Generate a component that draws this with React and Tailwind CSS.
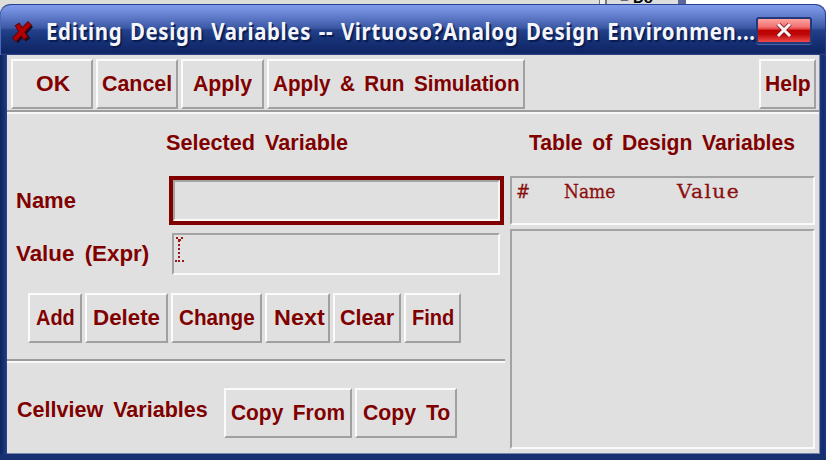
import { useLayoutEffect, useRef } from "react";

// Single-line text squeezed or stretched horizontally to a fixed width.
function Fit({ w, children, className = "" }) {
  const ref = useRef(null);
  useLayoutEffect(() => {
    const el = ref.current;
    el.style.transform = `scaleX(${w / el.offsetWidth})`;
  }, [w]);
  return (
    <span className="block h-6 shrink-0 leading-6" style={{ width: w }}>
      <span ref={ref} className={`inline-block origin-left whitespace-pre ${className}`}>
        {children}
      </span>
    </span>
  );
}

const bold = "font-['Liberation_Sans',sans-serif] text-[22px] font-bold [word-spacing:4px] text-[#800000]";
const mono = "font-['DejaVu_Serif',serif] text-[18px] text-[#8a1010] [-webkit-text-stroke:0.3px_#8a1010]";

function Label({ w, children }) {
  return <Fit w={w} className={bold}>{children}</Fit>;
}

function Button({ size, w, children }) {
  return (
    <button
      className={`flex h-[50px] shrink-0 items-center justify-center border-2 border-t-[#fbfbfb] border-l-[#fbfbfb] border-r-[#a0a0a0] border-b-[#a0a0a0] bg-[#e0e0e0] ${size}`}
    >
      <Label w={w}>{children}</Label>
    </button>
  );
}

const sunken = "border-2 border-t-[#a3a3a3] border-l-[#a3a3a3] border-r-[#f9f9f9] border-b-[#f9f9f9]";

function Rule() {
  return (
    <div className="h-1 shrink-0 border-t-2 border-b-2 border-t-[#9c9c9c] border-b-[#f8f8f8]" />
  );
}

function TitleBar() {
  return (
    <header className="flex h-[51px] shrink-0 items-center rounded-t-[10px] border-t border-[#26438f] bg-[linear-gradient(180deg,#7f9ae8_0px,#7590df_5px,#5b77c6_13px,#3b58a3_23px,#24408a_25px,#183478_34px,#0f2465_48px,#31488d_50px)] pl-3 shadow-[inset_1px_0_0_#4968b5,inset_-1px_0_0_#263f8d]">
      <svg width="22" height="24" viewBox="0 0 22 24" className="mt-[3px] shrink-0">
        <path d="M6 6 15 19M18 4 3 20" stroke="#180c26" strokeWidth="5.5" transform="translate(1 1)" />
        <path d="M5 4 14 19M18 3 2 20" stroke="#600008" strokeWidth="5.5" />
        <path d="M5.5 5 13.5 18M17.5 3.5 2.5 19.5" stroke="#b40000" strokeWidth="4" />
      </svg>
      <div className="mt-[2px] ml-3 h-8">
        <Fit
          w={710}
          className="font-['Noto_Sans','Open_Sans',sans-serif] text-[24px] leading-8 font-bold tracking-[0.8px] text-[#f4f6fc] [word-spacing:2px] [text-shadow:2px_2px_1px_#0a1b50]"
        >
          Editing Design Variables -- Virtuoso?Analog Design Environmen...
        </Fit>
      </div>
      <button className="flex h-[27px] w-[56px] shrink-0 items-center justify-center rounded-[3px] border-2 border-[#23397c] bg-[linear-gradient(180deg,#ffa4a0_0%,#f07070_35%,#dc3434_45%,#bc0000_50%,#c00808_68%,#ef4b4b_100%)] shadow-[0_1px_0_#4864a8]">
        <svg width="16" height="14" viewBox="0 0 16 14">
          <path d="M2 1 14 13M14 1 2 13" stroke="#7c1018" strokeWidth="4.5" />
          <path d="M2 1 14 13M14 1 2 13" stroke="#f8f4f4" strokeWidth="3" />
        </svg>
      </button>
    </header>
  );
}

export default function App() {
  return (
    <div className="relative flex h-[460px] w-[826px] flex-col overflow-hidden bg-[linear-gradient(90deg,#dedfdb_0_599px,#777_599px_600px,#eee_600px_605px,#777_605px_607px,#dedede_607px_678px,#5e6597_678px_686px,#fff_686px)] pt-1">
      <div className="absolute top-[-10px] left-[620px] h-4 font-['Liberation_Sans',sans-serif] text-[15px] leading-4 font-bold text-black">
        = Do
      </div>
      <div className="absolute top-3 left-0 h-10 w-1 bg-[#203a83]" />
      <div className="relative flex min-h-0 flex-1 flex-col">
        <TitleBar />
        <div className="flex min-h-0 flex-1 bg-[linear-gradient(90deg,#0d235f_0,#1b347a_5px,#2b468d_7px,#1d377d_820px,#142b6c_823px,#1b3782_826px)] pr-[6px] pb-[6px] pl-[7px] shadow-[inset_0_-6px_0_#17306f]">
          <main className="flex min-w-0 flex-1 flex-col border-r border-b border-[#7884a8] bg-[#e0e0e0]">
            <nav className="flex h-[55px] shrink-0 items-start justify-between pt-1 pr-[3px] pl-1">
              <div className="flex gap-[3px]">
                <Button size="w-[82px]" w={34}>OK</Button>
                <Button size="w-[82px]" w={70}>Cancel</Button>
                <Button size="w-[83px]" w={59}>Apply</Button>
                <Button size="w-[258px]" w={247}>{"Apply & Run Simulation"}</Button>
              </div>
              <Button size="w-[57px]" w={46}>Help</Button>
            </nav>
            <Rule />
            <div className="flex min-h-0 flex-1">
              <section className="flex w-[498px] flex-col">
                <div className="flex h-[62px] shrink-0 pt-[17px] pl-[159px]">
                  <Label w={182}>Selected Variable</Label>
                </div>
                <div className="flex h-[49px] shrink-0 items-center justify-between pr-[1px] pl-[9px]">
                  <Label w={60}>Name</Label>
                  <div className="h-[49px] w-[335px] border-4 border-[#800000]">
                    <div className={`h-full ${sunken}`} />
                  </div>
                </div>
                <div className="mt-2 flex h-[42px] shrink-0 items-center justify-between pr-[5px] pl-[9px]">
                  <Label w={133}>Value (Expr)</Label>
                  <div className={`h-[42px] w-[328px] pt-[2px] ${sunken}`}>
                    <svg width="10" height="26" viewBox="0 0 10 26" shapeRendering="crispEdges">
                      <path d="M5 3V25" stroke="#981818" strokeWidth="1.5" strokeDasharray="2 2" />
                      <path d="M2 1h2M7 1h2M4 3h3M1 24h2M8 24h2" stroke="#981818" strokeWidth="1.5" />
                    </svg>
                  </div>
                </div>
                <div className="mt-[18px] flex shrink-0 gap-[3px] pl-[21px]">
                  <Button size="w-[54px]" w={39}>Add</Button>
                  <Button size="w-[83px]" w={67}>Delete</Button>
                  <Button size="w-[91px]" w={76}>Change</Button>
                  <Button size="w-[65px]" w={51}>Next</Button>
                  <Button size="w-[68px]" w={54}>Clear</Button>
                  <Button size="w-[57px]" w={42}>Find</Button>
                </div>
                <div className="mt-4">
                  <Rule />
                </div>
                <div className="mt-[25px] flex items-start pl-[10px]">
                  <div className="mt-[10px] mr-[16px]">
                    <Label w={191}>Cellview Variables</Label>
                  </div>
                  <div className="flex gap-[3px]">
                    <Button size="w-[128px]" w={114}>Copy From</Button>
                    <Button size="w-[102px]" w={87}>Copy To</Button>
                  </div>
                </div>
              </section>
              <section className="flex flex-1 flex-col pl-[5px]">
                <div className="flex h-[62px] shrink-0 pt-[17px] pl-[19px]">
                  <Label w={266}>Table of Design Variables</Label>
                </div>
                <div className={`flex h-[49px] w-[305px] shrink-0 pt-[2px] pl-[4px] ${sunken}`}>
                  <Fit w={14} className={mono}>#</Fit>
                  <div className="ml-[34px]">
                    <Fit w={51} className={mono}>Name</Fit>
                  </div>
                  <div className="ml-[62px]">
                    <Fit w={63} className={`${mono} tracking-[1.2px]`}>Value</Fit>
                  </div>
                </div>
                <div className={`mt-1 h-[220px] w-[305px] shrink-0 ${sunken}`} />
              </section>
            </div>
          </main>
        </div>
      </div>
    </div>
  );
}
